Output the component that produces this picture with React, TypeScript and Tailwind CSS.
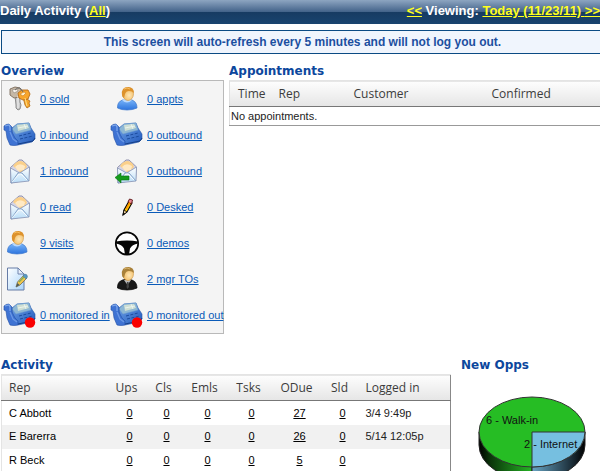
import React from "react";

const SANS = "font-['Liberation_Sans',Arial,sans-serif]";
const HEADING = "font-['DejaVu_Sans',Verdana,sans-serif] text-[12px] leading-[17px] font-bold text-[#0c479d]";
const TABLE_HEAD = "font-['Open_Sans','Noto_Sans',sans-serif] text-[12px] font-normal text-[#3c3c3c]";

function IconFrame({ children }: { children: React.ReactNode }) {
  return (
    <svg viewBox="0 0 34 30" className="h-[30px] w-[34px] shrink-0" aria-hidden="true">
      {children}
    </svg>
  );
}

function Keys() {
  return (
    <IconFrame>
      <path d="M12 12l1 9v3l2 2 2-1 1-4-1-3V12z" fill="#c9c9c9" stroke="#777" strokeWidth=".8" />
      <path d="M7 5l5-2 5 1 2 4-2 5-6 1-4-3z" fill="#c6b8a6" stroke="#7c6c5c" strokeWidth=".9" />
      <path d="M9 6l5-1 1 2-4 2z" fill="#f7f2ec" stroke="#8b8177" strokeWidth=".6" />
      <path d="M15 12v12" stroke="#f4f4f4" strokeWidth="1" />
      <path d="M20 13l2 8 2 3 3-2-1-3 1-2-2-1-1-4z" fill="#f6a62a" stroke="#b16b16" strokeWidth=".8" />
      <path d="M15 9l4-3 6 0 2 4-2 5-5 1-4-2z" fill="#f9a52b" stroke="#b86c18" strokeWidth=".9" />
      <path d="M17 10l4-2 2 1-3 3z" fill="#fff1cf" stroke="#c77a20" strokeWidth=".6" />
      <path d="M22 14l2 8" stroke="#ffe08a" strokeWidth="1" />
      <path d="M12 6q5-5 8 2" fill="none" stroke="#6a6a6a" strokeWidth="1" />
    </IconFrame>
  );
}

function Phone({ monitored = false }: { monitored?: boolean }) {
  return (
    <IconFrame>
      <defs>
        <linearGradient id="phoneBase" x1="0" y1="0" x2="1" y2="1">
          <stop offset="0" stopColor="#6fa2e6" />
          <stop offset="1" stopColor="#2159bd" />
        </linearGradient>
      </defs>
      <path d="M9 8L14 4l12-1 2 5 4 6v5l-3 3-14 3-5-4z" fill="url(#phoneBase)" stroke="#2556a8" strokeWidth=".6" />
      <path d="M9 9l5-5 12-1 2 7-15 4z" fill="#8db7d4" stroke="#6f9ed0" strokeWidth=".5" />
      <path d="M14 5l10-1 2 4-11 3z" fill="#cfdfd3" />
      <path d="M21 4l2 5M15 8l10-2" stroke="#f0f7f2" strokeWidth=".8" />
      <path d="M16 16l12-3M17 19l13-3" stroke="#1b4c9f" strokeWidth="1" strokeDasharray="3 1.500" />
      <path d="M15 24l15-3 2-3" fill="none" stroke="#163f88" strokeWidth="1" />
      <path d="M1 6q2-2 5-2l3 3v5l3 6 3 3v4q-4 1-8 0L4 18 3 11 1 10z" fill="#3f73d3" stroke="#1f4ea6" strokeWidth=".6" />
      <path d="M2 6l4-1 1 2 0 4" fill="none" stroke="#7fa9ec" strokeWidth="1.200" />
      <path d="M7 12l3 7 4 3" fill="none" stroke="#6b99e5" strokeWidth="1.200" />
      {monitored && <circle cx="27" cy="22.5" r="5.2" fill="#f90000" />}
    </IconFrame>
  );
}

function Mail({ reply = false }: { reply?: boolean }) {
  return (
    <IconFrame>
      <defs>
        <linearGradient id="mailFront" x1="0" y1="0" x2="0" y2="1">
          <stop offset="0" stopColor="#ffffff" />
          <stop offset="1" stopColor="#b9ddf8" />
        </linearGradient>
      </defs>
      <path d="M7.500 11.500L16 4h3l7.500 7-1 12.500L8 27z" fill="#d4d5e8" stroke="#9393ae" strokeWidth="1" />
      <path d="M10 10q3-5 8-5 5 1 6 6l-6 6z" fill="#fbd08a" />
      <path d="M12 11q4-5 10-1l-1 4-6 1z" fill="#ffe9c4" />
      <path d="M7.500 12l9 5 10-6-.5 14-18 2z" fill="url(#mailFront)" stroke="#8e9bb9" strokeWidth=".9" />
      <path d="M8 27l7-10h4l7 8" fill="none" stroke="#86a3c8" strokeWidth="1" />
      <path d="M9 26l7-8h2l6 6" fill="none" stroke="#fff" strokeWidth=".8" />
      {reply && <path d="M5 21.500l6-4.500v3h8v4h-8v3z" fill="#159b1c" stroke="#087510" strokeWidth=".6" />}
    </IconFrame>
  );
}

function Person({ suit = false, left = false }: { suit?: boolean; left?: boolean }) {
  return (
    <IconFrame>
      <defs>
        <linearGradient id="personBlue" x1="0" y1="0" x2="0" y2="1">
          <stop offset="0" stopColor="#7db9fb" />
          <stop offset="1" stopColor="#2c73dd" />
        </linearGradient>
        <radialGradient id="personFace" cx=".6" cy=".6" r=".6">
          <stop offset="0" stopColor="#ffe7b5" />
          <stop offset="1" stopColor="#efb65a" />
        </radialGradient>
      </defs>
      <g transform={left ? "translate(-3 0)" : undefined}>
        <path
          d="M7.500 24q-.5-6 5-8l4.500-1 5 1q5 2 5 8-4 2-10 2t-9.500-2z"
          fill={suit ? "#181818" : "url(#personBlue)"}
          stroke={suit ? "#000" : "#3c77cb"}
          strokeWidth=".7"
        />
        {suit ? (
          <>
            <path d="M14 16l3.500 5 3.500-5z" fill="#b9b9b9" />
            <path d="M17 18h1.500l.5 5-1.500 2-1-2z" fill="#444" />
          </>
        ) : (
          <path d="M12 16q5 5 10 0l-2-1h-6z" fill="#b9d9fd" />
        )}
        <ellipse cx="18" cy="10" rx="5.500" ry="6.500" fill="url(#personFace)" stroke="#c68a35" strokeWidth=".5" />
        <path
          d="M12 11q-1-8 6-8 6 0 6 6-2-2-5-2-3 0-4 3l-1 4q-2-1-2-3z"
          fill={suit ? "#a9813a" : "#dd922c"}
        />
        <path d="M14 5q3-2 6 0" fill="none" stroke={suit ? "#d3b069" : "#f6bd60"} strokeWidth="1" />
      </g>
    </IconFrame>
  );
}

function Pencil() {
  return (
    <IconFrame>
      <path d="M13 23l1-5 5-9 3 2-5 9z" fill="#ffc800" stroke="#000" strokeWidth="1.100" />
      <path d="M13 23l1-5 3 2z" fill="#f4d6a4" stroke="#000" strokeWidth=".8" />
      <path d="M13 23l.5-2.500 1.500 1z" fill="#000" />
      <path d="M18 10l1.500-3 3 1-1 4z" fill="#e88a9c" stroke="#5b1010" strokeWidth=".9" />
      <path d="M16 17l4-7" stroke="#ff8800" strokeWidth="1.200" />
    </IconFrame>
  );
}

function Wheel() {
  return (
    <IconFrame>
      <circle cx="17" cy="15.500" r="11.200" fill="#fff" stroke="#050505" strokeWidth="1.700" />
      <path d="M6 13.500q5-1 11-1t11 1v2q-6 1-8 5l-1 6h-4l-1-6q-2-4-8-5z" fill="#050505" />
    </IconFrame>
  );
}

function Writeup() {
  return (
    <IconFrame>
      <defs>
        <linearGradient id="sheet" x1="0" y1="0" x2="1" y2="1">
          <stop offset="0" stopColor="#fff" />
          <stop offset="1" stopColor="#a9d4fb" />
        </linearGradient>
      </defs>
      <path d="M4.500 4H15l6 6v16H4.500z" fill="url(#sheet)" stroke="#667ca6" strokeWidth="1" />
      <path d="M15 4v6h6z" fill="#e6eefb" stroke="#667ca6" strokeWidth=".9" />
      <path d="M13 23l1.500-5L21 11l3 3-7 7z" fill="#f2c64b" stroke="#6b6a58" strokeWidth=".8" />
      <path d="M20 12l1.500-2q3 0 3 3L23 15z" fill="#5798c2" stroke="#467597" strokeWidth=".5" />
      <path d="M13 23l1.500-4 2 2z" fill="#4b5a5e" />
      <path d="M16 18l5-5" stroke="#7fae57" strokeWidth="1.100" />
    </IconFrame>
  );
}

const overview: { label: string; icon: React.ReactNode }[] = [
  { label: "0 sold", icon: <Keys /> },
  { label: "0 appts", icon: <Person /> },
  { label: "0 inbound", icon: <Phone /> },
  { label: "0 outbound", icon: <Phone /> },
  { label: "1 inbound", icon: <Mail /> },
  { label: "0 outbound", icon: <Mail reply /> },
  { label: "0 read", icon: <Mail /> },
  { label: "0 Desked", icon: <Pencil /> },
  { label: "9 visits", icon: <Person left /> },
  { label: "0 demos", icon: <Wheel /> },
  { label: "1 writeup", icon: <Writeup /> },
  { label: "2 mgr TOs", icon: <Person suit /> },
  { label: "0 monitored in", icon: <Phone monitored /> },
  { label: "0 monitored out", icon: <Phone monitored /> },
];

const countColumns = ["Ups", "Cls", "Emls", "Tsks", "ODue", "Sld"];

const reps = [
  { name: "C Abbott", counts: [0, 0, 0, 0, 27, 0], login: "3/4 9:49p" },
  { name: "E Barerra", counts: [0, 0, 0, 0, 26, 0], login: "5/14 12:05p" },
  { name: "R Beck", counts: [0, 0, 0, 0, 5, 0], login: "" },
];

function OppsChart() {
  return (
    <svg viewBox="0 0 139 97" className="h-[97px] w-[139px]" role="img" aria-label="New opportunities by source">
      <defs>
        <linearGradient id="rimGreen" x1="0" y1="0" x2="1" y2="0">
          <stop offset="0" stopColor="#000" />
          <stop offset=".2" stopColor="#0a3209" />
          <stop offset="1" stopColor="#25b524" />
        </linearGradient>
        <linearGradient id="rimBlue" x1="0" y1="0" x2="1" y2="0">
          <stop offset="0" stopColor="#68a5c4" />
          <stop offset=".75" stopColor="#1b2d38" />
          <stop offset="1" stopColor="#000" />
        </linearGradient>
      </defs>
      <path d="M18 58v13a53 35 0 0 0 53 35V58z" fill="url(#rimGreen)" stroke="#222" />
      <path d="M124 58v13a53 35 0 0 1-53 35V58z" fill="url(#rimBlue)" stroke="#222" />
      <ellipse cx="71" cy="58" rx="53" ry="35" fill="#26bd24" stroke="#333" />
      <path d="M71 58h53a53 35 0 0 1-53 35z" fill="#76bfe0" stroke="#333" />
      <g className="font-['Liberation_Sans',Arial,sans-serif] text-[11px]" fill="#111">
        <text x="25" y="50">6 - Walk-in</text>
        <text x="63" y="74">2 - Internet</text>
      </g>
    </svg>
  );
}

export default function App() {
  return (
    <div className={`${SANS} h-screen overflow-hidden bg-white text-[11px] text-[#222]`}>
      <header className="flex h-6 items-center justify-between bg-[linear-gradient(to_bottom,#8da5c1_0px,#426289_12px,#173b62_12px,#19446f_24px)] pb-0.5 text-[13px] leading-5 font-bold whitespace-nowrap text-white">
        <h1>
          Daily Activity (<a href="#all" className="text-[#ffff1e] underline">All</a>)
        </h1>
        <nav aria-label="Day">
          <a href="#previous" className="text-[#ffff1e] underline">&lt;&lt;</a> Viewing:{" "}
          <a href="#today" className="text-[#ffff1e] underline">Today (11/23/11) </a>
          <a href="#next" className="text-[#ffff1e] underline">&gt;&gt;</a>
        </nav>
      </header>

      <p className="mt-1.5 -mr-1 ml-px flex h-6 items-center justify-center border border-[#0b4b84] bg-[#f0f5fd] text-[12px] font-bold text-[#1c4fa0]">
        This screen will auto-refresh every 5 minutes and will not log you out.
      </p>

      <main className="pt-[9px] pl-px">
        <div className="flex gap-[5px]">
          <section className="w-[223px] shrink-0">
            <h2 className={HEADING}>Overview</h2>
            <ul className="grid grid-cols-[107px_1fr] border border-[#b9b9b9] bg-[#f4f4f4]">
              {overview.map((item, i) => (
                <li key={i} className="flex h-9 items-center gap-[3px] pl-px whitespace-nowrap">
                  {item.icon}
                  <a href="#detail" className="text-[#0b5bb8] underline">{item.label}</a>
                </li>
              ))}
            </ul>
          </section>

          <section className="min-w-0 flex-1">
            <h2 className={HEADING}>Appointments</h2>
            <table className="w-full table-fixed border-l border-[#dedede] text-left">
              <colgroup>
                <col className="w-[41px]" />
                <col className="w-[75px]" />
                <col className="w-[138px]" />
                <col />
              </colgroup>
              <thead className="border-t border-b border-t-[#e4e4e4] border-b-[#777] bg-[linear-gradient(#fdfdfd,#e6e6e6)]">
                <tr className={`${TABLE_HEAD} h-[26px]`}>
                  {["Time", "Rep", "Customer", "Confirmed"].map((name) => (
                    <th key={name} scope="col" className="pl-2 font-normal">{name}</th>
                  ))}
                </tr>
              </thead>
              <tbody>
                <tr className="h-[19px] border-b border-[#999]">
                  <td colSpan={4} className="pl-px">No appointments.</td>
                </tr>
              </tbody>
            </table>
          </section>
        </div>

        <div className="mt-[23px] flex gap-2.5">
          <section className="w-[450px] shrink-0">
            <h2 className={HEADING}>Activity</h2>
            <table className="w-full table-fixed border-r border-l border-r-[#888] border-l-[#e4e4e4] text-left">
              <colgroup>
                <col className="w-[108px]" />
                <col className="w-10" />
                <col className="w-[34px]" />
                <col className="w-12" />
                <col className="w-10" />
                <col className="w-14" />
                <col className="w-[30px]" />
                <col />
              </colgroup>
              <thead className="border-t border-b border-t-[#e4e4e4] border-b-[#777] bg-[linear-gradient(#fdfdfd,#e6e6e6)]">
                <tr className={`${TABLE_HEAD} h-[26px]`}>
                  <th scope="col" className="pl-[7px] font-normal">Rep</th>
                  {countColumns.map((name) => (
                    <th key={name} scope="col" className="pr-1.5 text-center font-normal">{name}</th>
                  ))}
                  <th scope="col" className="pl-2 font-normal">Logged in</th>
                </tr>
              </thead>
              <tbody>
                {reps.map((rep) => (
                  <tr key={rep.name} className="h-6 even:bg-[#f1f1f1]">
                    <td className="pl-[7px] text-black">{rep.name}</td>
                    {rep.counts.map((count, i) => (
                      <td key={i} className="text-center">
                        <a href="#count" className="text-black underline">{count}</a>
                      </td>
                    ))}
                    <td className="pl-2">{rep.login}</td>
                  </tr>
                ))}
              </tbody>
            </table>
          </section>

          <section>
            <h2 className={HEADING}>New Opps</h2>
            <OppsChart />
          </section>
        </div>
      </main>
    </div>
  );
}
